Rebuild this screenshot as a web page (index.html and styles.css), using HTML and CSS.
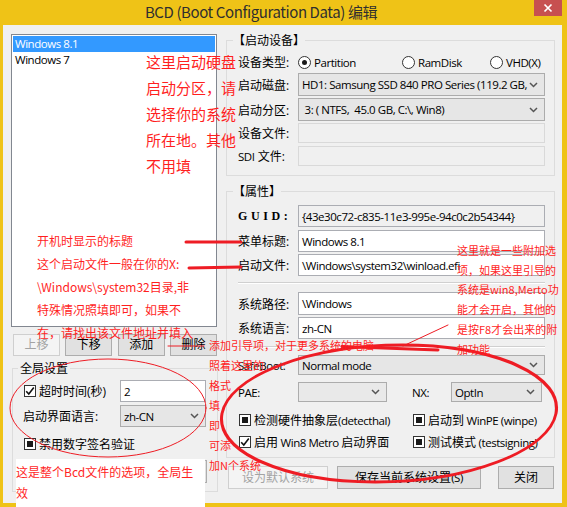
FILE: index.html
```html
<!DOCTYPE html>
<html>
<head>
<meta charset="utf-8">
<link rel="stylesheet" href="styles.css">
</head>
<body>
<div class="window">
  <div class="titlebar">
    <div class="title">BCD (Boot Configuration Data) 编辑</div>
    <div class="close"><svg width="28" height="16" viewBox="0 0 28 16"><path d="M10.5 4.5 L17.5 11.5 M17.5 4.5 L10.5 11.5" stroke="#fff" stroke-width="1.7" fill="none"/></svg></div>
  </div>
  <div class="client">
    <div class="leftcol">
      <div class="listbox">
        <div class="item sel">Windows 8.1</div>
        <div class="item">Windows 7</div>
      </div>
      <div class="btnrow">
        <div class="btn dis">上移</div>
        <div class="btn">下移</div>
        <div class="btn">添加</div>
        <div class="btn">删除</div>
      </div>
      <fieldset class="group global">
        <legend>全局设置</legend>
        <div class="grow g1">
          <div class="glabel"><span class="cb"><svg width="10" height="10" viewBox="0 0 10 10"><path d="M1.2 5.2 L3.8 8 L8.8 1.6" fill="none" stroke="#111" stroke-width="1.6"/></svg></span><span>超时时间(秒)</span></div>
          <div class="tb gtb">2</div>
        </div>
        <div class="grow g2">
          <div class="glabel pl">启动界面语言:</div>
          <div class="combo gtb"><span>zh-CN</span><svg class="arr" width="9" height="6" viewBox="0 0 9 6"><path d="M1 1 L4.5 4.5 L8 1" fill="none" stroke="#555" stroke-width="1.5"/></svg></div>
        </div>
        <div class="grow g3">
          <span class="cb"><span class="ind"></span></span><span>禁用数字签名验证</span>
        </div>
        <div class="grow g4">
          <div class="btn hidebtn"></div>
        </div>
      </fieldset>
    </div>

    <div class="rightcol">
      <fieldset class="group dev">
        <legend>【启动设备】</legend>
        <div class="row radios">
          <div class="lbl">设备类型:</div>
          <div class="radio r1"><span class="rb on"></span><span class="L">Partition</span></div>
          <div class="radio r2"><span class="rb"></span><span class="L">RamDisk</span></div>
          <div class="radio"><span class="rb"></span><span class="L">VHD(X)</span></div>
        </div>
        <div class="row h23 m1">
          <div class="lbl">启动磁盘:</div>
          <div class="combo ctl"><span>HD1: Samsung SSD 840 PRO Series (119.2 GB,</span><svg class="arr" width="9" height="6" viewBox="0 0 9 6"><path d="M1 1 L4.5 4.5 L8 1" fill="none" stroke="#555" stroke-width="1.5"/></svg></div>
        </div>
        <div class="row h23 m2">
          <div class="lbl">启动分区:</div>
          <div class="combo ctl"><span>&nbsp;3: ( NTFS,&nbsp; 45.0 GB, C:\, Win8)</span><svg class="arr" width="9" height="6" viewBox="0 0 9 6"><path d="M1 1 L4.5 4.5 L8 1" fill="none" stroke="#555" stroke-width="1.5"/></svg></div>
        </div>
        <div class="row h20 m2">
          <div class="lbl">设备文件:</div>
          <div class="tb ctl disabled"></div>
        </div>
        <div class="row h20 m3">
          <div class="lbl"><span class="L">SDI</span> 文件:</div>
          <div class="tb ctl disabled"></div>
        </div>
      </fieldset>

      <fieldset class="group prop">
        <legend>【属性】</legend>
        <div class="row h22 m6">
          <div class="lbl guid">GUID:</div>
          <div class="tb ctl ro">{43e30c72-c835-11e3-995e-94c0c2b54344}</div>
        </div>
        <div class="row h22 m3">
          <div class="lbl">菜单标题:</div>
          <div class="tb ctl">Windows 8.1</div>
        </div>
        <div class="row h22 m2">
          <div class="lbl">启动文件:</div>
          <div class="tb ctl">\Windows\system32\winload.efi</div>
        </div>
        <div class="sep s1"></div>
        <div class="row h23 m8">
          <div class="lbl">系统路径:</div>
          <div class="tb ctl">\Windows</div>
        </div>
        <div class="row h22 m2">
          <div class="lbl">系统语言:</div>
          <div class="tb ctl">zh-CN</div>
        </div>
        <div class="sep s2"></div>
        <div class="row h20 m7">
          <div class="lbl L">SafeBoot:</div>
          <div class="combo ctl"><span>Normal mode</span><svg class="arr" width="9" height="6" viewBox="0 0 9 6"><path d="M1 1 L4.5 4.5 L8 1" fill="none" stroke="#555" stroke-width="1.5"/></svg></div>
        </div>
        <div class="row h20 m7">
          <div class="lbl L">PAE:</div>
          <div class="combo pae"><span></span><svg class="arr" width="9" height="6" viewBox="0 0 9 6"><path d="M1 1 L4.5 4.5 L8 1" fill="none" stroke="#555" stroke-width="1.5"/></svg></div>
          <div class="lbl nx L">NX:</div>
          <div class="combo nxc"><span>OptIn</span><svg class="arr" width="9" height="6" viewBox="0 0 9 6"><path d="M1 1 L4.5 4.5 L8 1" fill="none" stroke="#555" stroke-width="1.5"/></svg></div>
        </div>
        <div class="row chk m10">
          <div class="ck"><span class="cb"><span class="ind"></span></span><span>检测硬件抽象层<span class="L">(detecthal)</span></span></div>
          <div class="ck"><span class="cb"><span class="ind"></span></span><span>启动到<span class="L"> WinPE (winpe)</span></span></div>
        </div>
        <div class="row chk m6">
          <div class="ck"><span class="cb"><svg width="10" height="10" viewBox="0 0 10 10"><path d="M1.2 5.2 L3.8 8 L8.8 1.6" fill="none" stroke="#111" stroke-width="1.6"/></svg></span><span>启用<span class="L"> Win8 Metro </span>启动界面</span></div>
          <div class="ck"><span class="cb"><span class="ind"></span></span><span>测试模式<span class="L"> (testsigning)</span></span></div>
        </div>
      </fieldset>

      <div class="bottombtns">
        <div class="btn dis b1">设为默认系统</div>
        <div class="btn b2">保存当前系统设置<span class="L">(S)</span></div>
        <div class="btn b3">关闭</div>
      </div>
    </div>
  </div>

  <svg class="marks" width="567" height="507" viewBox="0 0 567 507">
    <g fill="none" stroke="#ee1c24" stroke-linecap="round">
      <line x1="186" y1="242" x2="241" y2="242" stroke-width="3"/>
      <line x1="189" y1="268" x2="241" y2="267" stroke-width="3"/>
      <line x1="168" y1="346" x2="204" y2="346" stroke-width="1"/>
      <line x1="403" y1="346" x2="448" y2="325" stroke-width="1"/>
      <path d="M342 346.5 L438 350" stroke-width="3"/>
      <ellipse cx="108" cy="408" rx="98" ry="49" stroke-width="1"/>
      <ellipse cx="0" cy="0" rx="167" ry="68.5" stroke-width="3" transform="translate(389 413.5) skewX(-11)"/>
    </g>
  </svg>

  <div class="note n-list">这里启动硬盘<br>启动分区，请<br>选择你的系统<br>所在地。其他<br>不用填</div>
  <div class="note n-left">开机时显示的标题<br>这个启动文件一般在你的X:<br>\Windows\system32目录,非<br>特殊情况照填即可，如果不<br>在，请找出该文件地址并填入</div>
  <div class="note n-right">这里就是一些附加选<br>项，如果这里引导的<br>系统是win8,Merto功<br>能才会开启，其他的<br>是按F8才会出来的附<br>加功能</div>
  <div class="note n-mid">添加引导项，对于更多系统的电脑<br>照着这里的<br>格式<br>填<br>即<br>可添<br>加N个系统</div>
  <div class="note n-box">这是整个Bcd文件的选项，全局生<br>效</div>
</div>
</body>
</html>
```

FILE: styles.css
```css
* { box-sizing: border-box; }
body {
  margin: 0;
  background: #ffffff;
  font-family: "Open Sans", "Noto Sans CJK SC", sans-serif;
  font-size: 12px;
  color: #000;
}
.L,
.item,
.tb,
.combo {
  font-family: "Open Sans", "Noto Sans CJK SC", sans-serif;
  font-size: 11.5px;
  letter-spacing: -0.45px;
}
.window {
  position: relative;
  width: 567px;
  height: 507px;
  background: #efc317;
  overflow: hidden;
}
.titlebar {
  height: 25px;
  display: flex;
  align-items: flex-start;
}
.title {
  width: 522px;
  text-align: center;
  font-family: "Noto Sans CJK SC", sans-serif;
  font-size: 15px;
  letter-spacing: -0.4px;
  line-height: 24px;
  color: #2f2f2f;
}
.close {
  margin-left: 12px;
  width: 28px;
  height: 16px;
  background: #c75050;
}
.close svg { display: block; }

.client {
  margin-left: 3px;
  width: 559px;
  height: 478px;
  background: #f0f0f0;
  display: flex;
  align-items: flex-start;
}
.leftcol {
  margin-left: 8px;
  padding-top: 9px;
  width: 207px;
}
.listbox {
  width: 206px;
  height: 293px;
  border: 1px solid #828790;
  background: #fff;
  padding: 1px;
}
.item {
  height: 16px;
  line-height: 16px;
  padding-left: 2px;
  white-space: nowrap;
}
.item.sel { background: #3399ff; color: #fff; }

.btn {
  height: 22px;
  border: 1px solid #adadad;
  background: #e1e1e1;
  text-align: center;
  line-height: 20px;
  white-space: nowrap;
}
.btn.dis {
  color: #a3a3a3;
  border-color: #cfcfcf;
  background: #f4f4f4;
}
.btnrow {
  display: flex;
  justify-content: space-between;
  margin: 7px 0 0 2px;
  width: 204px;
}
.btnrow .btn { width: 47px; }

fieldset.group {
  margin: 0;
  padding: 0;
  border: 1px solid #dcdcdc;
  min-width: 0;
}
fieldset.group legend {
  padding: 0 2px;
  line-height: 16px;
  height: 16px;
  font-family: "Noto Sans CJK SC", sans-serif;
}
.global {
  margin-top: 4px !important;
  margin-left: 1px !important;
  width: 206px;
  padding-bottom: 8px !important;
}
.global legend { margin-left: 5px; }
.grow {
  display: flex;
  align-items: center;
  white-space: nowrap;
}
.g1 { margin-top: 4px; height: 22px; }
.g2 { margin-top: 3px; height: 22px; }
.g3 { margin-top: 9px; height: 16px; padding-left: 11px; }
.g4 { margin-top: 8px; height: 23px; }
.glabel {
  width: 107px;
  display: flex;
  align-items: center;
  padding-left: 11px;
}
.glabel.pl { padding-left: 10px; }
.gtb { width: 86px; height: 22px; }
.hidebtn { margin-left: 107px; width: 87px; height: 23px; }

.cb {
  width: 12px;
  height: 12px;
  border: 1px solid #333;
  background: #fff;
  display: inline-flex;
  align-items: center;
  justify-content: center;
  margin-right: 3px;
  flex: none;
}
.cb svg { display: block; }
.ind {
  width: 6px;
  height: 6px;
  background: #1a1a1a;
}

.tb {
  border: 1px solid #abadb3;
  background: #fff;
  padding-left: 3px;
  display: flex;
  align-items: center;
  white-space: nowrap;
  overflow: hidden;
}
.tb.ro { background: #f0f0f0; }
.tb.disabled { background: #f0f0f0; border-color: #d9d9d9; }
.combo {
  border: 1px solid #acacac;
  background: #e6e6e6;
  display: flex;
  align-items: center;
  justify-content: space-between;
  padding: 0 6px 0 3px;
  white-space: nowrap;
  overflow: hidden;
}
.combo .arr { flex: none; }

.rightcol {
  margin-left: 8px;
  padding-top: 7px;
  width: 329px;
}
.dev, .prop {
  width: 329px;
  padding: 0 9px 9px 11px !important;
}
.dev legend, .prop legend { margin-left: -5px; padding: 0 !important; }
.prop { margin-top: 7px !important; padding-bottom: 7px !important; }

.row {
  display: flex;
  align-items: center;
  white-space: nowrap;
}
.lbl {
  width: 60px;
  flex: none;
  white-space: nowrap;
}
.ctl { width: 247px; height: 100%; }
.h20 { height: 20px; }
.h22 { height: 22px; }
.h23 { height: 23px; }
.m1 { margin-top: 1px; }
.m2 { margin-top: 2px; }
.m3 { margin-top: 3px; }
.m6 { margin-top: 6px; }
.m7 { margin-top: 7px; }
.m8 { margin-top: 8px; }
.m10 { margin-top: 10px; }

.radios { margin-top: 4px; height: 20px; }
.radio { display: flex; align-items: center; }
.r1 { width: 104px; }
.r2 { width: 88px; }
.rb {
  width: 13px;
  height: 13px;
  border: 1px solid #333;
  border-radius: 50%;
  background: #fff;
  margin-right: 3px;
  display: inline-flex;
  align-items: center;
  justify-content: center;
}
.rb.on::after {
  content: "";
  width: 5px;
  height: 5px;
  border-radius: 50%;
  background: #1a1a1a;
}

.guid {
  font-family: "Liberation Serif", serif;
  font-weight: bold;
  letter-spacing: 3.6px;
  font-size: 12px;
}

.sep {
  height: 2px;
  border-top: 1px solid #d0d0d0;
  border-bottom: 1px solid #fff;
  width: 307px;
}
.s1 { margin-top: 6px; }
.s2 { margin-top: 7px; }

.pae { width: 89px; height: 20px; background: #e9e9e9; }
.lbl.nx { width: auto; margin-left: 25px; margin-right: 22px; }
.nxc { width: 91px; height: 20px; }

.chk { height: 16px; }
.ck { display: flex; align-items: center; white-space: nowrap; }
.ck:first-child { width: 175px; padding-left: 1px; }

.bottombtns {
  display: flex;
  margin-top: 8px;
  margin-left: 2px;
}
.bottombtns .btn { height: 23px; line-height: 21px; }
.b1 { width: 100px; }
.b2 { width: 144px; margin-left: 9px; }
.b3 { width: 56px; margin-left: 17px; }

.marks {
  position: absolute;
  left: 0;
  top: 0;
  pointer-events: none;
}
.note {
  position: absolute;
  color: #ff1f1f;
  white-space: nowrap;
  font-family: "Noto Sans CJK SC", sans-serif;
}
.n-list { left: 146px; top: 49px; font-size: 15px; line-height: 26px; }
.n-left { left: 37px; top: 229px; font-size: 12px; line-height: 23px; }
.n-right { left: 457px; top: 241px; font-size: 11px; line-height: 19.7px; }
.n-mid { left: 209px; top: 335px; font-size: 11px; line-height: 20px; }
.n-box {
  left: 16px;
  top: 459px;
  width: 189px;
  height: 48px;
  background: #fff;
  padding-top: 2px;
  font-size: 12px;
  line-height: 21px;
}
```
